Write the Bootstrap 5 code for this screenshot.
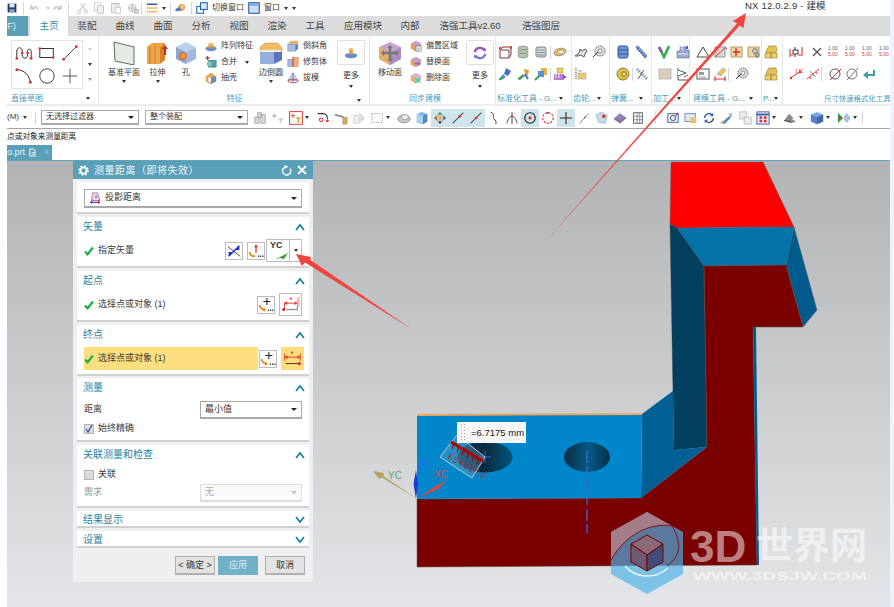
<!DOCTYPE html>
<html lang="zh">
<head>
  <meta charset="UTF-8" />
  <title>NX 12.0.2.9 - 建模</title>
  <link href="https://cdn.jsdelivr.net/npm/bootstrap@5.3.3/dist/css/bootstrap.min.css" rel="stylesheet">
  <style>
    html, body { height: 607px; overflow: hidden; }
    body { margin: 0; font: 8px/1.1 "Liberation Sans", "Noto Sans CJK SC", sans-serif; color: #3a3a3a;
           background: linear-gradient(90deg, #fff 7px, #eef3fb 7px); }
    .app { margin-left: 7px; width: 883px; height: 607px; position: relative; }
    .ic { width: 14px; height: 14px; flex: none; display: block; }
    .ic12 { width: 12px; height: 12px; flex: none; display: block; }
    .ic10 { width: 10px; height: 10px; flex: none; display: block; }

    .quick { height: 16px; background: #fff; }
    .qsep { width: 1px; height: 13px; background: #d8d8d8; flex: none; }
    .qsep.first { margin-left: 6px; }
    .qslot { width: 17px; flex: none; display: flex; justify-content: center; }
    .qcaret { margin: 0 2px 0 6px; }
    .mini-caret { width: 0; height: 0; border: 2px solid transparent; border-top: 3px solid #333; border-bottom: 0; flex: none; }
    .nx-title { position: absolute; left: 738px; top: 1px; font-size: 9.5px; letter-spacing: .2px; color: #333; }

    .tabs { height: 20px; background: #dcdcdc; font-size: 9.5px; }
    .file-tab { width: 21px; height: 20px; background: #5a9fb8; color: #d9edf3; line-height: 20px; }
    .rtab { width: 38px; height: 20px; text-align: center; line-height: 20px; color: #444; flex: none; }
    .rtab.on { background: #fff; color: #2f8db0; margin-left: 2px; }
    .rtab.w48 { width: 58px; }
    .rtab.w30 { width: 36px; }
    .rtab.wa { width: 84px; }

    .ribbon { height: 68px; background: #fff; }
    .rgrp { flex: none; border-right: 1px solid #e6e6e6; height: 68px; position: relative; }
    .rbody { height: 57px; }
    .rtop { padding-top: 5px; }
    .rlabel { height: 11px; color: #4b9dbd; font-size: 8px; line-height: 11px; white-space: nowrap; overflow: hidden; padding-left: 1px; }
    .w-g1 { width: 92px; } .w-g2 { width: 271px; } .w-g3 { width: 126px; } .w-g4 { width: 76px; }
    .w-g5 { width: 38px; } .w-g6 { width: 42px; } .w-g7 { width: 38px; } .w-g8 { width: 72px; }
    .w-g9 { width: 21px; } .w-g10 { width: 107px; border-right: 0; }
    .sk-box { width: 72px; height: 49px; border: 1px solid #e2e2e2; margin: 4px 0 0 4px; display: grid;
              grid-template-columns: repeat(3, 1fr); place-items: center; }
    .sk-box svg { width: 18px; height: 18px; }
    .sk-scroll { width: 10px; margin: 4px 0 0 2px; height: 49px; }
    .bigb { flex: none; text-align: center; padding-top: 5px; height: 56px; }
    .bigb svg { width: 24px; height: 24px; }
    .bigb .lb { margin-top: 4px; height: 11px; white-space: nowrap; }
    .w36 { width: 36px; } .w31 { width: 31px; } .w26 { width: 26px; } .w28 { width: 28px; }
    .smallcol { flex: none; padding-top: 2px; }
    .smallrow { height: 16px; gap: 4px; white-space: nowrap; }
    .col-a { width: 52px; margin-left: 6px; }
    .col-b { width: 50px; margin-left: 2px; }
    .col-c { width: 54px; margin-left: 2px; }
    .more-p { padding-left: 7px; }
    .ms2 { margin-left: 2px; }
    .morebox { width: 28px; height: 25px; border: 1px solid #e0e0e0; border-radius: 2px; flex: none; margin-top: 4px; }
    .morecol { flex: none; width: 28px; text-align: center; }
    .morecol .lb { margin-top: 7px; }
    .irow { height: 22px; }
    .islot { width: 18px; flex: none; }
    .islot17 { width: 17px; flex: none; }
    .vs { width: 1px; height: 13px; background: #d4d4d4; flex: none; }
    .dim-label { padding-left: 41px; font-size: 7.4px; }

    .gapbar { height: 2px; background: #ededed; }
    .tools { height: 22px; background: #fff; padding-top: 1px; }
    .tb { width: 18px; height: 18px; flex: none; display: flex; align-items: center; justify-content: center; }
    .tb.act { background: #cfe5ec; }
    .cr { width: 9px; flex: none; }
    .tsel { height: 15px; border: 1px solid #aaa; border-bottom-width: 2px; border-radius: 0; padding: 0 4px; font-size: 8px; line-height: 12px; color: #333; background: #fff; flex: none; }
    .dropdown-toggle::after { border-top-width: 3px; border-left-width: 3px; border-right-width: 3px; margin-left: 0; color: #222; }
    .tsel1 { width: 98px; margin-left: 5px; }
    .tsel2 { width: 103px; margin-left: 6px; margin-right: 3px; }
    .toolline { height: 1px; background: #a5a5a5; }
    .cue { height: 16px; background: #fff; color: #222; line-height: 16px; font-size: 7.7px; }
    .docbar { height: 15px; background: #fff; }
    .doctab { width: 45px; height: 15px; background: #5a9fb8; color: #eaf5f8; font-size: 9px; line-height: 15px; overflow: hidden; }

    .viewport { height: 447px; position: relative; border-top: 1px solid #62a6bd;
                background: linear-gradient(#b2b3b5, #e4e5e8); }
    .model { position: absolute; left: 0; top: 0; width: 883px; height: 446px; display: block; }
    .overlay { position: absolute; left: -7px; top: 0; width: 894px; height: 607px; pointer-events: none; }

    .dlg { position: absolute; left: 66px; top: 0; width: 240px; height: 421px; background: #efefef; font-size: 9px; }
    .dlg-head { height: 18px; background: #5a9fb8; color: #eaf5f8; font-size: 10px; padding: 0 5px 0 5px; }
    .dlg-title { margin-left: 5px; letter-spacing: .5px; }
    .dlg-body { padding: 3px 4px 0; gap: 3px; }
    .sec { background: #fff; border-bottom: 2px solid #d0d0d0; padding: 0 7px; flex: none; position: relative; }
    .sec-h { height: 19px; color: #2b7f9f; font-size: 10px; margin-left: -1px; }
    .sec-h svg { margin-right: -3px; }
    .h32 { height: 32px; padding-top: 7px; } .h51 { height: 51px; } .h64 { height: 64px; } .h63 { height: 63px; }
    .pull { margin-top: -1px; }
    .h17 { height: 17px; } .h17 .sec-h { height: 15px; margin-top: 1px; }
    .dsel { height: 19px; width: 100%; background: #fff; border: 1px solid #a8a8a8; border-bottom-width: 2px; border-radius: 0; padding: 0 4px; font-size: 9px; color: #333; }
    .dsel.sm { width: 102px; height: 18px; }
    .dsel.off { color: #aaa; border-color: #ddd; background: #fafafa; }
    .dsel.off::after { color: #bbb; }
    .row-sel { height: 23px; gap: 4px; margin-top: 3px; }
    .ibtn { width: 18px; height: 18px; border: 1px solid #bbb; background: #fff; flex: none; }
    .ibtn.big { width: 23px; height: 23px; }
    .ibtn.yel { background: #fedd7a; border-color: #fedd7a; }
    .ibtn.tuck { margin-left: -3px; }
    .yc-box { width: 36px; height: 23px; border: 1px solid #bbb; flex: none; margin-left: 1px; }
    .yc-l { width: 23px; border-right: 1px solid #bbb; position: relative; font-size: 9px; font-weight: 700; color: #333; padding: 1px 0 0 3px; height: 21px; }
    .yellow { background: #fedf7f; height: 23px; width: 174px; flex: none; }
    .chk-row { min-height: 0; margin-bottom: 0; padding: 0; }
    .form-check-input.ck { width: 10px; height: 10px; margin: 0; border-radius: 0; background-color: #dcdcdc; border-color: #b5b5b5; flex: none; opacity: 1; float: none; }
    .form-check-input.ck:checked { background-color: #dcdcdc; border-color: #b5b5b5;
      background-image: url("data:image/svg+xml,%3csvg xmlns='http://www.w3.org/2000/svg' viewBox='0 0 10 10'%3e%3cpath d='M2 5l2 3 4-7' fill='none' stroke='%233a4f9a' stroke-width='1.2'/%3e%3c/svg%3e"); background-size: 10px; }
    .gap5 { margin-top: 5px; }
    .gap6 { margin-top: 6px; }
    .dfoot { padding: 8px 8px 0 0; gap: 3px; }
    .dbtn { height: 19px; padding: 0; border: 1px solid #b0b0b0; border-bottom-width: 2px; border-radius: 0; background: #e2e2e2; font-size: 9px; color: #333; line-height: 15px; }
    .dbtn.apply { background: #70b1c8; border-color: #70b1c8; color: #d8edf3; }
    .w40 { width: 40px; }

    .measure { position: absolute; left: 450px; top: 261px; width: 69px; height: 21px; background: #f5f5f5; border: 1px solid #fff;
               font: 9.5px/19px "Liberation Sans", sans-serif; color: #222; padding-left: 2px; gap: 5px; white-space: nowrap; }
    .grip { width: 6px; height: 17px; background-image: radial-gradient(#aaa 35%, transparent 40%); background-size: 3px 3px; flex: none; }
  </style>
</head>
<body>
<svg width="0" height="0" class="position-absolute">
  <defs>
    <symbol id="save" viewBox="0 0 16 16"><rect x="1" y="1" width="14" height="14" fill="#1d3c6e"/><rect x="4" y="1" width="8" height="6" fill="#e3e9f1"/><rect x="4" y="10" width="8" height="5" fill="#8ea6c6"/></symbol>
    <symbol id="undo" viewBox="0 0 16 16"><path d="M4 4v5h5M4 9c2-4 8-4 9 1" fill="none" stroke="#c2c2c2" stroke-width="1.8"/></symbol>
    <symbol id="redo" viewBox="0 0 16 16"><path d="M12 4v5H7M12 9C10 5 4 5 3 10" fill="none" stroke="#c2c2c2" stroke-width="1.8"/></symbol>
    <symbol id="cut" viewBox="0 0 16 16"><path d="M12 2 5 11M6 2l7 9" stroke="#c6c6c6" stroke-width="1.5"/><circle cx="4" cy="13" r="2" fill="none" stroke="#bbb"/><circle cx="13" cy="13" r="2" fill="none" stroke="#bbb"/></symbol>
    <symbol id="copy" viewBox="0 0 16 16"><rect x="2" y="1" width="8" height="10" fill="#fff" stroke="#c2c2c2"/><rect x="6" y="5" width="8" height="10" fill="#f1f1f1" stroke="#bbb"/></symbol>
    <symbol id="paste" viewBox="0 0 16 16"><rect x="2" y="2" width="10" height="12" fill="#eee" stroke="#bbb"/><rect x="5" y="1" width="4" height="3" fill="#ccc"/><rect x="7" y="7" width="7" height="8" fill="#fff" stroke="#bbb"/></symbol>
    <symbol id="target" viewBox="0 0 16 16"><circle cx="7" cy="8" r="5" fill="#eee" stroke="#bbb"/><path d="M7 2v12M1 8h12" stroke="#aaa"/><rect x="10" y="10" width="5" height="5" fill="#ddd" stroke="#aaa"/></symbol>
    <symbol id="bars" viewBox="0 0 16 16"><path d="M1 3h14" stroke="#3558a8" stroke-width="2"/><path d="M1 8h14M1 13h14" stroke="#e29a2d" stroke-width="2" stroke-dasharray="2 1"/></symbol>
    <symbol id="planet" viewBox="0 0 16 16"><circle cx="9" cy="7" r="4.5" fill="#e8a13c"/><ellipse cx="7" cy="9" rx="7" ry="2.4" transform="rotate(-20 7 9)" fill="#5c7bb6"/><circle cx="10" cy="7" r="3" fill="#f5c465"/></symbol>
    <symbol id="winsw" viewBox="0 0 16 16"><rect x="1" y="6" width="9" height="9" fill="#fff" stroke="#1f5fb0" stroke-width="1.4"/><rect x="6" y="1" width="9" height="9" fill="#dce9f8" stroke="#1f5fb0" stroke-width="1.4"/></symbol>
    <symbol id="winblue" viewBox="0 0 16 16"><rect x="1" y="1" width="14" height="14" fill="#cfe0f7" stroke="#24509c" stroke-width="1.4"/><rect x="2" y="2" width="12" height="3" fill="#7fa6de"/></symbol>

    <symbol id="sk1" viewBox="0 0 20 20"><path d="M2 16V8c0-5 6-5 6 0v4c0 5 6 5 6 0V8c0-3 4-3 4 0v8" fill="none" stroke="#333" stroke-width="1.1"/><g fill="#d33"><circle cx="2" cy="16" r="1.5"/><circle cx="8" cy="10" r="1.5"/><circle cx="14" cy="10" r="1.5"/><circle cx="18" cy="16" r="1.5"/></g></symbol>
    <symbol id="sk2" viewBox="0 0 20 20"><rect x="2" y="5" width="15" height="10" fill="none" stroke="#333" stroke-width="1.1"/><circle cx="2" cy="5" r="1.4" fill="#d33"/><circle cx="17" cy="15" r="1.4" fill="#d33"/></symbol>
    <symbol id="sk3" viewBox="0 0 20 20"><path d="M3 17 17 3" stroke="#555" stroke-width="1.1"/><circle cx="3" cy="17" r="1.6" fill="#d33"/><circle cx="17" cy="3" r="1.6" fill="#d33"/></symbol>
    <symbol id="sk4" viewBox="0 0 20 20"><path d="M2 3c8 0 14 6 15 14" fill="none" stroke="#333" stroke-width="1.1"/><circle cx="2" cy="3" r="1.6" fill="#d33"/><circle cx="17" cy="17" r="1.6" fill="#d33"/></symbol>
    <symbol id="sk5" viewBox="0 0 20 20"><circle cx="10" cy="10" r="8" fill="none" stroke="#444" stroke-width="1.1"/></symbol>
    <symbol id="sk6" viewBox="0 0 20 20"><path d="M10 2v16M2 10h16" stroke="#555" stroke-width="1.1"/></symbol>

    <symbol id="plane" viewBox="0 0 24 24"><path d="M2 1l20 5v18L3 20z" fill="#e4ebe3" stroke="#666"/></symbol>
    <symbol id="extrude" viewBox="0 0 24 24"><path d="M1 6l5-4h13l-5 4z" fill="#f0a33c"/><path d="M1 6h13v17H1z" fill="#eda553"/><path d="M4 6v17M9 6v17" stroke="#c97a1f"/><path d="M14 6l5-4v17l-5 4z" fill="#d8812b"/><path d="M19 14v-6" stroke="#d22" stroke-width="2"/><path d="M16 8l3-4 3 4z" fill="#d22"/></symbol>
    <symbol id="hole" viewBox="0 0 24 24"><path d="M12 1l10 5-10 5L2 6z" fill="#bcd0ec"/><path d="M2 6l10 5v12L2 18z" fill="#8ea4cf"/><path d="M22 6l-10 5v12l10-5z" fill="#a4b7df"/><circle cx="9" cy="15" r="3.4" fill="#f29b1e" stroke="#d33" stroke-width=".7"/></symbol>
    <symbol id="blend" viewBox="0 0 24 24"><path d="M1 6l5-4h13l4 5v4H1z" fill="#f3bc62" stroke="#b98" stroke-width=".6"/><path d="M1 9h21v2H1z" fill="#e9eef7"/><path d="M1 11h14v12H1z" fill="#98afdc"/><path d="M15 11h8v8l-8 4z" fill="#5677b9"/></symbol>
    <symbol id="move" viewBox="0 0 24 24"><path d="M12 1l11 5v12l-11 6L1 18V6z" fill="#cba3cc"/><path d="M1 6l11 6v12L1 18z" fill="#e3b06b"/><path d="M23 6l-11 6v12l11-6z" fill="#a98cc0"/><path d="M12 6v13M5 12h14" stroke="#777" stroke-width="2.4"/><path d="M12 4l3 3H9zM12 21l3-3H9zM3 12l3-3v6zM21 12l-3-3v6z" fill="#777"/></symbol>
    <symbol id="more1" viewBox="0 0 16 16"><ellipse cx="8" cy="11" rx="7" ry="3" fill="#5c8dd0"/><rect x="6" y="3" width="4" height="7" fill="#ee9933"/><ellipse cx="8" cy="3.5" rx="2" ry="1.4" fill="#f6bd70"/></symbol>
    <symbol id="more2" viewBox="0 0 16 16"><path d="M2 7a6 6 0 0 1 11-2" fill="none" stroke="#9a4fbe" stroke-width="2.6"/><path d="M14 9a6 6 0 0 1-11 2" fill="none" stroke="#6f7fd0" stroke-width="2.6"/><path d="M11 2l4 1-1 4zM5 14l-4-1 1-4z" fill="#9a4fbe"/></symbol>

    <symbol id="array" viewBox="0 0 14 14"><ellipse cx="7" cy="10" rx="6.5" ry="3" fill="#6f90c8"/><path d="M4 9V5h6v4z" fill="#ea9a35"/><ellipse cx="7" cy="5" rx="3" ry="2" fill="#f4bf74"/></symbol>
    <symbol id="merge" viewBox="0 0 14 14"><rect x="4" y="5" width="9" height="8" fill="#4fa6a0" stroke="#2d6e70" stroke-width=".6"/><circle cx="5" cy="9" r="3" fill="#7fcac0"/><path d="M3 0v5M.5 2.5h5" stroke="#d22" stroke-width="1.3"/></symbol>
    <symbol id="shell" viewBox="0 0 14 14"><path d="M1 5l6-4 6 4v6l-6 3-6-3z" fill="#e7a24f"/><path d="M7 6l6-1v6l-6 3z" fill="#6e8ac4"/><path d="M4 6l3 1v5l-3-1z" fill="#fff"/></symbol>
    <symbol id="chamfer" viewBox="0 0 14 14"><path d="M1 5l3-4h9v4z" fill="#ecb26a"/><rect x="1" y="5" width="9" height="8" fill="#a9bee3" stroke="#6a7fb2" stroke-width=".6"/><path d="M10 5h3v5l-3 3z" fill="#5f7fbe"/></symbol>
    <symbol id="trim" viewBox="0 0 14 14"><rect x="1" y="4" width="6" height="8" fill="#a7bce4" stroke="#6a7fb2" stroke-width=".6"/><rect x="7" y="2" width="6" height="10" fill="#ebb06a" stroke="#c77" stroke-width=".6"/><path d="M7 1v12" stroke="#d33"/></symbol>
    <symbol id="draft" viewBox="0 0 14 14"><path d="M7 1l6 9H1z" fill="#cdd8ef" stroke="#6f84b8" stroke-width=".6"/><ellipse cx="7" cy="10.5" rx="6" ry="2" fill="none" stroke="#d33" stroke-width=".9"/><path d="M7 1v12" stroke="#2a58b0" stroke-width=".8"/></symbol>
    <symbol id="sync1" viewBox="0 0 14 14"><path d="M7 1l6 3v6l-6 3-6-3V4z" fill="#c99acb"/><path d="M1 4l6 3v6l-6-3z" fill="#e8a35a"/><rect x="7" y="7" width="6" height="6" fill="#fff" stroke="#666" stroke-width=".7"/><path d="M8.5 9.5h3M8.5 11.5h3" stroke="#666" stroke-width=".7"/></symbol>
    <symbol id="sync2" viewBox="0 0 14 14"><path d="M7 1l6 3v6l-6 3-6-3V4z" fill="#c99acb"/><path d="M1 4l6 3v6l-6-3z" fill="#e8a35a"/><path d="M5 9h6M9 7l2 2-2 2" fill="none" stroke="#666" stroke-width="1"/></symbol>
    <symbol id="sync3" viewBox="0 0 14 14"><path d="M7 1l6 3v6l-6 3-6-3V4z" fill="#d8b4d8"/><path d="M1 4l6 3v6l-6-3z" fill="#e9b26e"/><path d="M6 7l6 6M12 7l-6 6" stroke="#3d8" stroke-width="1.4"/></symbol>

    <symbol id="a1" viewBox="0 0 14 14"><path d="M2 5h9v8H2z" fill="#fff" stroke="#7a3a3a"/><path d="M2 5l3-3h8v8l-2 3" fill="none" stroke="#7a3a3a"/><path d="M1 4l2-2M13 1v3" stroke="#d22" stroke-width="1.5"/></symbol>
    <symbol id="a2" viewBox="0 0 14 14"><g fill="#b6c4b0" stroke="#6e7f72" stroke-width=".7"><ellipse cx="7" cy="3.5" rx="5" ry="2.3"/><ellipse cx="7" cy="7" rx="5" ry="2.3"/><ellipse cx="7" cy="10.5" rx="5" ry="2.3"/></g></symbol>
    <symbol id="a3" viewBox="0 0 14 14"><rect x="2" y="2" width="10" height="10" rx="2" fill="#cfd8c8" stroke="#7b8a80"/><path d="M3 5h8M3 7.5h8M3 10h8" stroke="#6a8aa8" stroke-width=".8"/></symbol>
    <symbol id="a4" viewBox="0 0 14 14"><ellipse cx="7" cy="7" rx="6" ry="3.6" fill="#f2b85e" stroke="#777" stroke-width=".7" transform="rotate(-15 7 7)"/><ellipse cx="8" cy="7" rx="3" ry="1.5" fill="#fff" stroke="#777" stroke-width=".5"/></symbol>
    <symbol id="b1" viewBox="0 0 14 14"><path d="M8 1l5 3-3 5-4-2z" fill="#3f6ec6"/><path d="M5 7l-4 5 2 1 5-3z" fill="#5e8ed8"/><path d="M1 13l3-2 1 1" stroke="#2aa348" stroke-width="1.5" fill="none"/></symbol>
    <symbol id="b2" viewBox="0 0 14 14"><path d="M1 12L7 7l2 2-5 4z" fill="#4d9a5c"/><path d="M8 2l5 1-1 5-3-1z" fill="#d9a23a"/><path d="M9 7l3 5" stroke="#3f6ec6" stroke-width="2"/></symbol>
    <symbol id="b3" viewBox="0 0 14 14"><path d="M7 1h6v7H7z" fill="#e8b545"/><path d="M4 4h6v6H4z" fill="#5e8ed8"/><path d="M1 13l4-4" stroke="#2aa348" stroke-width="2"/></symbol>
    <symbol id="b4" viewBox="0 0 14 14"><path d="M4 1h6v5H4z" fill="#e8cf65" stroke="#a08a30" stroke-width=".5"/><rect x="1" y="7" width="10" height="6" fill="#b47fc8"/><path d="M10 8l4 2-4 2z" fill="#8e3fb8"/><path d="M3 6v5M6 6v5" stroke="#eee"/></symbol>
    <symbol id="c1" viewBox="0 0 14 14"><path d="M1 11l4-3 1-4 2 2 3-2 2 2-2 3-1 3-3-2-3 1z" fill="#ddd" stroke="#333" stroke-width=".8"/></symbol>
    <symbol id="c2" viewBox="0 0 14 14"><circle cx="8" cy="6" r="5" fill="#ddd" stroke="#444" stroke-width=".8" stroke-dasharray="1.5 .8"/><path d="M1 12l5-5" stroke="#333"/><circle cx="8" cy="6" r="2" fill="#fff" stroke="#444" stroke-width=".6"/></symbol>
    <symbol id="c3" viewBox="0 0 14 14"><path d="M2 1v12" stroke="#333" stroke-dasharray="1 1"/><rect x="4" y="6" width="8" height="6" fill="#eec978" stroke="#998" stroke-width=".5"/><rect x="4" y="3" width="4" height="2" fill="#ccc"/></symbol>
    <symbol id="d1" viewBox="0 0 14 14"><rect x="2" y="1" width="10" height="12" rx="2" fill="#7096d6" stroke="#33558f"/><path d="M2 5h10M2 9h10" stroke="#33558f"/></symbol>
    <symbol id="d2" viewBox="0 0 14 14"><path d="M2 2l2-1 9 10-2 2z" fill="#7fa3e0" stroke="#33558f" stroke-width=".7"/><path d="M4 3l-1 2M6 5l-1 2M8 7l-1 2M10 9l-1 2" stroke="#33558f"/></symbol>
    <symbol id="d3" viewBox="0 0 14 14"><circle cx="7" cy="7" r="6" fill="#e0bf4a" stroke="#8a7a30"/><circle cx="8" cy="7" r="3" fill="#b3972f"/><circle cx="8" cy="7" r="1.3" fill="#e9e3be"/></symbol>
    <symbol id="d4" viewBox="0 0 14 14"><path d="M2 2l10 10" stroke="#8a97ae" stroke-width="3" stroke-dasharray="1.5 1"/><path d="M9 3l-6 9" stroke="#555"/></symbol>
    <symbol id="e1" viewBox="0 0 14 14"><path d="M1 2l5 10 5-11" fill="none" stroke="#2db04b" stroke-width="2.6"/><path d="M1 2l3 5" stroke="#8a4fc8" stroke-width="2.4"/></symbol>
    <symbol id="e2" viewBox="0 0 14 14"><path d="M4 2h6v3h3v8H1V6h3z" fill="#9aa9d6" stroke="#6a6f92" stroke-width=".6"/><path d="M6 2v3M2 9h10" stroke="#eee"/><path d="M10 1h2v3h-2z" fill="#3f70c0"/></symbol>
    <symbol id="e3" viewBox="0 0 14 14"><rect x="1" y="2" width="12" height="10" fill="#cfd3d8" stroke="#999" stroke-width=".6"/><path d="M1 7h12M5 2v10M9 2v10" stroke="#e9c57d"/></symbol>
    <symbol id="e4" viewBox="0 0 14 14"><path d="M2 1v12h10" fill="none" stroke="#555"/><path d="M2 3l8 3-8 3" fill="#fff" stroke="#2a7a55"/><path d="M8 10l4-2" stroke="#d33"/></symbol>
    <symbol id="f1" viewBox="0 0 14 14"><path d="M7 2L1 12h12z" fill="#fff" stroke="#444"/></symbol>
    <symbol id="f2" viewBox="0 0 14 14"><rect x="2" y="2" width="10" height="10" fill="#d8d8d8" stroke="#999"/><path d="M12 2l2 2M2 12l10-9" stroke="#c33"/></symbol>
    <symbol id="f3" viewBox="0 0 14 14"><rect x="1" y="2" width="11" height="10" fill="#eed9a4" stroke="#b59a5a"/><path d="M6 3v8M3 7h7" stroke="#d22" stroke-width="1.3"/></symbol>
    <symbol id="f4" viewBox="0 0 14 14"><rect x="1" y="2" width="11" height="10" fill="#eed9a4" stroke="#b59a5a"/><circle cx="8" cy="6" r="2.4" fill="#ccc" stroke="#777"/><circle cx="10" cy="10" r="2" fill="#bbb" stroke="#777"/></symbol>
    <symbol id="f5" viewBox="0 0 14 14"><rect x="1" y="2" width="12" height="10" fill="#fff" stroke="#555"/><rect x="3" y="5" width="5" height="3" fill="#999"/><path d="M3 10h7" stroke="#999"/></symbol>
    <symbol id="f6" viewBox="0 0 14 14"><path d="M4 7l6-6 3 2-5 6z" fill="#eac75a" stroke="#888" stroke-width=".5"/><path d="M1 12h12M2 9v5M12 9v5" stroke="#d33"/></symbol>
    <symbol id="g1" viewBox="0 0 14 14"><path d="M5 1h7l1 5-3 2-2-1-3 2-3-1 1-4z" fill="#e8c04f" stroke="#8a7a30" stroke-width=".6"/><path d="M1 8h6v5H1zM7 8h6v5H7z" fill="#f0cf6a" stroke="#8a7a30" stroke-width=".6"/></symbol>
    <symbol id="h1" viewBox="0 0 14 14"><path d="M4 5h5v4H4zM6 5V2M6 9v3" fill="#fff" stroke="#333"/><path d="M1 10h3M9 10h3M1 4v8M13 2v9" stroke="#d22"/></symbol>
    <symbol id="h2" viewBox="0 0 14 14"><path d="M3 3l8 8M11 3l-8 8" stroke="#555" stroke-width="1.3"/></symbol>
    <symbol id="h3" viewBox="0 0 14 14"><text x="1" y="5" font-size="5" fill="#666" font-family="Liberation Sans">1.00</text><text x="1" y="11" font-size="5" fill="#d33" font-family="Liberation Sans">5.00</text></symbol>
    <symbol id="h4" viewBox="0 0 14 14"><path d="M1 11l10-6" stroke="#d33"/><circle cx="2" cy="11" r="1.2" fill="#d33"/><circle cx="11" cy="5" r="1.2" fill="#d33"/><text x="6" y="6" font-size="4.5" fill="#d33" font-family="Liberation Sans">3.50</text></symbol>
    <symbol id="h5" viewBox="0 0 14 14"><path d="M1 12L13 2" stroke="#d33"/><path d="M4 10l1 2M7 7l1 2M10 5l1 2" stroke="#d33"/><path d="M4 4l6 6" stroke="#aaa"/></symbol>
    <symbol id="h6" viewBox="0 0 14 14"><circle cx="7" cy="7" r="5" fill="none" stroke="#555"/><path d="M2 13L13 2" stroke="#c33"/></symbol>
    <symbol id="h7" viewBox="0 0 14 14"><circle cx="7" cy="7" r="5" fill="none" stroke="#777"/><path d="M2 13L13 1" stroke="#777"/></symbol>
    <symbol id="h8" viewBox="0 0 14 14"><path d="M12 3v5H4" fill="none" stroke="#3aa3a8" stroke-width="2"/><path d="M6 4v8L1 8z" fill="#3aa3a8"/></symbol>

    <symbol id="k1" viewBox="0 0 16 16"><path d="M2 7h5v7H2zM9 4h5v10H9zM5 2h5v5H5z" fill="#d8d8d8" stroke="#aaa"/></symbol>
    <symbol id="k2" viewBox="0 0 16 16"><path d="M4 3v5M1.5 5.5h5" stroke="#bbb" stroke-width="1.6"/><path d="M8 8h7l-3 3v3h-2v-3z" fill="#d5d5d5"/></symbol>
    <symbol id="k3" viewBox="0 0 18 18"><rect x=".8" y=".8" width="16.4" height="16.4" fill="#fff" stroke="#d33" stroke-width="1.2"/><path d="M5 3v6M2 6h6" stroke="#d33"/><path d="M8 8h8l-3 3v4h-2v-4z" fill="#e3a92f"/></symbol>
    <symbol id="k4" viewBox="0 0 16 16"><path d="M2 3h6a5 5 0 0 1 5 6" fill="none" stroke="#333" stroke-width="1.2"/><path d="M13 9l2 2-2 2-2-2z" fill="#d33"/><circle cx="6" cy="10" r="2" fill="none" stroke="#d33" stroke-width="1.3"/></symbol>
    <symbol id="k5" viewBox="0 0 16 16"><path d="M1 3l10 3v2L1 5z" fill="#888"/><rect x="10" y="7" width="5" height="8" fill="#d6a94d" stroke="#888" stroke-width=".5"/></symbol>
    <symbol id="k6" viewBox="0 0 16 16"><path d="M2 5h7v9H2z" fill="#eee" stroke="#aaa" stroke-dasharray="1 1"/><path d="M8 2l6 6-4 5" fill="#ddd" stroke="#aaa" stroke-dasharray="1 1"/></symbol>
    <symbol id="k7" viewBox="0 0 16 16"><rect x="2" y="3" width="12" height="10" fill="#fff" stroke="#888" stroke-dasharray="1.4 1.4"/></symbol>
    <symbol id="k8" viewBox="0 0 16 16"><ellipse cx="8" cy="9" rx="7" ry="4.5" fill="#c9c9c9" stroke="#888"/><ellipse cx="9" cy="7" rx="4" ry="3" fill="#eee" stroke="#999"/></symbol>
    <symbol id="k9" viewBox="0 0 16 16"><path d="M2 4l5-3 7 2v9l-5 3-7-2z" fill="#7fb7e8"/><path d="M9 6l5-3v9l-5 3z" fill="#4c8bc9"/><path d="M2 4l7 2v9l-7-2z" fill="#a9d4f3"/></symbol>
    <symbol id="k10" viewBox="0 0 16 16"><path d="M8 2l6 6-6 6-6-6z" fill="#ccc" stroke="#333" stroke-dasharray="1.5 1"/><circle cx="8" cy="8" r="2" fill="#e8b42a"/><circle cx="8" cy="3" r="1.3" fill="#2aa348"/><circle cx="3" cy="8" r="1.3" fill="#d33"/><circle cx="13" cy="8" r="1.3" fill="#3358b8"/><circle cx="8" cy="13" r="1.3" fill="#222"/></symbol>
    <symbol id="k11" viewBox="0 0 16 16"><path d="M2 14L14 2" stroke="#333" stroke-width="1.2"/><circle cx="10" cy="6" r="1.5" fill="#d33"/></symbol>
    <symbol id="k12" viewBox="0 0 16 16"><path d="M2 14L14 2" stroke="#333" stroke-width="1.2"/><circle cx="8" cy="8" r="1.5" fill="#d33"/></symbol>
    <symbol id="k13" viewBox="0 0 16 16"><path d="M4 1c6 3 2 6 4 8s3 3 2 6" fill="none" stroke="#333" stroke-width="1.1"/></symbol>
    <symbol id="k14" viewBox="0 0 16 16"><path d="M2 14c2-6 4-8 6-8s4 2 6 8M8 1v14" fill="none" stroke="#333"/><circle cx="8" cy="6" r="1.1" fill="#d33"/></symbol>
    <symbol id="k15" viewBox="0 0 16 16"><circle cx="8" cy="8" r="6" fill="none" stroke="#222" stroke-width="1.3"/><circle cx="8" cy="8" r="1.7" fill="#d22"/></symbol>
    <symbol id="k16" viewBox="0 0 16 16"><circle cx="8" cy="8" r="6" fill="none" stroke="#d33" stroke-width="1.3" stroke-dasharray="2.5 1.5"/><circle cx="8" cy="2" r="1" fill="#333"/></symbol>
    <symbol id="k17" viewBox="0 0 16 16"><path d="M8 1v14M1 8h14" stroke="#222" stroke-width="1.2"/><circle cx="8" cy="8" r="1.3" fill="#d22"/></symbol>
    <symbol id="k18" viewBox="0 0 16 16"><path d="M3 14L13 3" stroke="#777"/><circle cx="9" cy="7.5" r="1" fill="#d33"/></symbol>
    <symbol id="k19" viewBox="0 0 16 16"><path d="M1 4l7-3 6 4-2 9-8-1z" fill="#c3ddec" stroke="#7aa" stroke-width=".6"/><circle cx="10" cy="6" r="2" fill="#d33"/></symbol>
    <symbol id="k20" viewBox="0 0 16 16"><path d="M1 9l7-6 7 5-7 6z" fill="#8286c9" stroke="#555" stroke-width=".6"/><path d="M4 9l4 3 4-3" stroke="#d33" fill="none"/></symbol>
    <symbol id="k21" viewBox="0 0 16 16"><rect x="3" y="2" width="10" height="12" fill="#fff" stroke="#555"/><path d="M3 6h10M3 10h10M7 2v12M10 2v12" stroke="#555" stroke-width=".7"/></symbol>
    <symbol id="m1" viewBox="0 0 16 16"><rect x="2" y="3" width="12" height="10" fill="#dfe9f6" stroke="#3a64b5"/><circle cx="8" cy="8" r="3" fill="none" stroke="#555"/><path d="M14 3l-3 2" stroke="#d33" stroke-width="1.4"/></symbol>
    <symbol id="m2" viewBox="0 0 16 16"><rect x="1" y="3" width="12" height="9" fill="#dfe9f6" stroke="#6f84b8"/><rect x="7" y="7" width="7" height="7" fill="#e8c27d"/></symbol>
    <symbol id="m3" viewBox="0 0 16 16"><path d="M3 8a5 5 0 0 1 9-3" fill="none" stroke="#3a64b5" stroke-width="1.6"/><path d="M13 8a5 5 0 0 1-9 3" fill="none" stroke="#555" stroke-width="1.6"/><path d="M13 2v4H9zM3 14v-4h4z" fill="#3a64b5"/></symbol>
    <symbol id="m4" viewBox="0 0 16 16"><path d="M2 13l7-6 5-3-3 5-6 6z" fill="#5d86cc"/><path d="M9 3l5-1-1 5z" fill="#9cc1e8"/><path d="M1 14l3-2" stroke="#e9a03b" stroke-width="2"/></symbol>
    <symbol id="m5" viewBox="0 0 16 16"><rect x="2" y="1" width="8" height="8" fill="#eee" stroke="#bbb"/><rect x="7" y="7" width="8" height="8" fill="#eee" stroke="#bbb"/></symbol>
    <symbol id="m6" viewBox="0 0 16 16"><rect x="1" y="1" width="14" height="14" fill="#e6ecf7" stroke="#3058a8"/><path d="M1 4h14" stroke="#3058a8" stroke-width="2"/><g fill="#d33"><rect x="4" y="6" width="3" height="3"/><rect x="9" y="6" width="3" height="3"/><rect x="4" y="10" width="3" height="3"/><rect x="9" y="10" width="3" height="3"/></g></symbol>
    <symbol id="m7" viewBox="0 0 16 16"><path d="M1 11l6-8 5 5-2 1 5 3-6 2z" fill="#8c8c8c"/><path d="M1 11l8 1" stroke="#444"/></symbol>
    <symbol id="m8" viewBox="0 0 16 16"><path d="M8 1l7 3v8l-7 3-7-3V4z" fill="#7fa7df"/><path d="M1 4l7 3v8l-7-3z" fill="#5a83c5"/><path d="M8 7l7-3v8l-7 3z" fill="#3f68ad"/></symbol>
    <symbol id="m9" viewBox="0 0 16 16"><path d="M1 2l6 6-6 6z" fill="#2aa348"/><path d="M2 6l4 2-4 2z" fill="#d33"/><path d="M8 8l3-5 4 5-4 5z" fill="#a9c4ec" stroke="#6a8ac2" stroke-width=".6"/></symbol>

    <symbol id="chev" viewBox="0 0 10 8"><path d="M1 7l4-5 4 5" fill="none" stroke="#1d7ea3" stroke-width="1.8"/></symbol>
    <symbol id="chevd" viewBox="0 0 10 8"><path d="M1 1l4 5 4-5" fill="none" stroke="#1d7ea3" stroke-width="1.8"/></symbol>
    <symbol id="ok" viewBox="0 0 10 10"><path d="M1 5.5 3.6 8.3 9 1.5" fill="none" stroke="#20b04a" stroke-width="2.3"/></symbol>
    <symbol id="pt" viewBox="0 0 18 18"><path d="M10 1v8M6 5h8" stroke="#222" stroke-width="1.2"/><path d="M2 9c0 4 3 5 6 5" fill="none" stroke="#e58a1f" stroke-width="2"/><path d="M5 16l2-3 2 3z" fill="#e58a1f"/><path d="M11 15h1.5M13.5 15H15M16 15h1.5" stroke="#444" stroke-width="1.6"/></symbol>
    <symbol id="dist1" viewBox="0 0 23 23"><path d="M5 9v8M19 6v11" stroke="#d33"/><path d="M5 10h14" stroke="#d33"/><path d="M5 10l3-2v4zM19 10l-3-2v4z" fill="#d33"/><rect x="11" y="4" width="2" height="2" fill="#d33"/><circle cx="4" cy="17" r="1.7" fill="#d22"/><path d="M7 17h13" stroke="#999" stroke-width="1.6"/><rect x="19" y="3" width="3" height="11" fill="#f3c6c6"/></symbol>
    <symbol id="dist2" viewBox="0 0 23 23"><path d="M3 6v8M20 6v8" stroke="#d33"/><path d="M3 10h17" stroke="#d33"/><path d="M3 10l3-2v4zM20 10l-3-2v4z" fill="#d33"/><rect x="10" y="4" width="2" height="2" fill="#d33"/><path d="M4 17h14" stroke="#444" stroke-width="1.2"/><circle cx="19" cy="17" r="1.7" fill="#d22"/></symbol>
    <symbol id="vec1" viewBox="0 0 18 18"><path d="M3 15L15 3" stroke="#1c30cc" stroke-width="1.6"/><path d="M15 3v5h-5z M3 15v-5h5z" fill="#1c30cc"/><path d="M2 4l14 11" stroke="#333"/></symbol>
    <symbol id="vec2" viewBox="0 0 18 18"><path d="M9 2v9" stroke="#d22" stroke-width="1.4"/><path d="M7 5l2-3 2 3z" fill="#d22"/><path d="M2 10c0 3 2 5 6 5" fill="none" stroke="#e58a1f" stroke-width="2"/><path d="M11 15h1.5M13.5 15H15M16 15h1.5" stroke="#444" stroke-width="1.6"/></symbol>
    <symbol id="proj" viewBox="0 0 14 14"><path d="M4 1h6l3 9H3z" fill="#e9d9e5" stroke="#a03a6a" stroke-width=".7"/><path d="M1 12h12" stroke="#2233cc" stroke-width="1.3"/><path d="M3 9v5M11 9v5" stroke="#d22"/><path d="M7 4h3v3H7z" fill="#8ab"/></symbol>
    <symbol id="doc" viewBox="0 0 8 10"><path d="M1 1h4l2 2v6H1z" fill="none" stroke="#eaf5f8" stroke-width="1.2"/><path d="M3 5h3M3 7h3" stroke="#eaf5f8"/></symbol>
  </defs>
</svg>

<div class="app d-flex flex-column">
  <div class="quick d-flex align-items-center">
    <svg class="ic10"><use href="#save"/></svg>
    <div class="qsep first"></div>
    <div class="d-flex align-items-center ms-1"><svg class="ic12"><use href="#undo"/></svg><div class="mini-caret qcaret opacity-25"></div><svg class="ic12"><use href="#redo"/></svg></div>
    <div class="qsep ms-1"></div>
    <div class="d-flex align-items-center ms-1"><span class="qslot"><svg class="ic12"><use href="#cut"/></svg></span><span class="qslot"><svg class="ic12"><use href="#copy"/></svg></span><span class="qslot"><svg class="ic12"><use href="#paste"/></svg></span><span class="qslot"><svg class="ic12"><use href="#target"/></svg></span></div>
    <div class="qsep"></div>
    <div class="d-flex align-items-center ms-1"><svg class="ic12"><use href="#bars"/></svg><div class="mini-caret ms-1"></div></div>
    <div class="qsep ms-1"></div>
    <svg class="ic12 ms-1"><use href="#planet"/></svg>
    <div class="qsep ms-1"></div>
    <svg class="ic12 ms-1"><use href="#winsw"/></svg>
    <span class="ms-1">切换窗口</span>
    <svg class="ic12 ms-1"><use href="#winblue"/></svg>
    <span class="ms-1">窗口</span>
    <div class="mini-caret ms-1"></div>
    <div class="mini-caret ms-1"></div>
    <span class="nx-title">NX 12.0.2.9 - 建模</span>
  </div>

  <div class="tabs d-flex">
    <div class="file-tab">F)</div>
    <div class="rtab on">主页</div>
    <div class="rtab">装配</div>
    <div class="rtab">曲线</div>
    <div class="rtab">曲面</div>
    <div class="rtab">分析</div>
    <div class="rtab">视图</div>
    <div class="rtab">渲染</div>
    <div class="rtab">工具</div>
    <div class="rtab w48">应用模块</div>
    <div class="rtab w30">内部</div>
    <div class="rtab wa">浩强工具v2.60</div>
    <div class="rtab w48">浩强图层</div>
  </div>

  <div class="ribbon d-flex">
    <div class="rgrp w-g1">
      <div class="rbody d-flex">
        <div class="sk-box">
          <svg><use href="#sk1"/></svg><svg><use href="#sk2"/></svg><svg><use href="#sk3"/></svg>
          <svg><use href="#sk4"/></svg><svg><use href="#sk5"/></svg><svg><use href="#sk6"/></svg>
        </div>
        <div class="sk-scroll d-flex flex-column justify-content-between align-items-center py-2"><div class="mini-caret opacity-25"></div><div class="mini-caret"></div><div class="mini-caret opacity-50"></div></div>
      </div>
      <div class="rlabel d-flex justify-content-between align-items-center ps-1 pe-2"><span>直接草图</span><div class="mini-caret"></div></div>
    </div>

    <div class="rgrp w-g2">
      <div class="rbody d-flex more-p">
        <div class="bigb w36"><svg><use href="#plane"/></svg><div class="lb">基准平面</div><div class="mini-caret mx-auto"></div></div>
        <div class="bigb w31"><svg><use href="#extrude"/></svg><div class="lb">拉伸</div><div class="mini-caret mx-auto"></div></div>
        <div class="bigb w26"><svg><use href="#hole"/></svg><div class="lb">孔</div></div>
        <div class="smallcol col-a">
          <div class="smallrow d-flex align-items-center"><svg class="ic12"><use href="#array"/></svg><span>阵列特征</span></div>
          <div class="smallrow d-flex align-items-center"><svg class="ic12"><use href="#merge"/></svg><span>合并</span><div class="mini-caret ms-1"></div></div>
          <div class="smallrow d-flex align-items-center"><svg class="ic12"><use href="#shell"/></svg><span>抽壳</span></div>
        </div>
        <div class="bigb w28"><svg><use href="#blend"/></svg><div class="lb">边倒圆</div><div class="mini-caret mx-auto"></div></div>
        <div class="smallcol col-b">
          <div class="smallrow d-flex align-items-center"><svg class="ic12"><use href="#chamfer"/></svg><span>倒斜角</span></div>
          <div class="smallrow d-flex align-items-center"><svg class="ic12"><use href="#trim"/></svg><span>修剪体</span></div>
          <div class="smallrow d-flex align-items-center"><svg class="ic12"><use href="#draft"/></svg><span>拔模</span></div>
        </div>
        <div class="morecol"><div class="morebox d-flex align-items-center justify-content-center"><svg class="ic"><use href="#more1"/></svg></div><div class="lb">更多</div><div class="mini-caret mx-auto mt-1"></div></div>
      </div>
      <div class="rlabel position-relative text-center">特征<div class="mini-caret position-absolute end-0 top-50 me-2"></div></div>
    </div>

    <div class="rgrp w-g3">
      <div class="rbody d-flex">
        <div class="bigb w36 ms2"><svg><use href="#move"/></svg><div class="lb">移动面</div></div>
        <div class="smallcol col-c">
          <div class="smallrow d-flex align-items-center"><svg class="ic12"><use href="#sync1"/></svg><span>偏置区域</span></div>
          <div class="smallrow d-flex align-items-center"><svg class="ic12"><use href="#sync2"/></svg><span>替换面</span></div>
          <div class="smallrow d-flex align-items-center"><svg class="ic12"><use href="#sync3"/></svg><span>删除面</span></div>
        </div>
        <div class="morecol ms2"><div class="morebox d-flex align-items-center justify-content-center"><svg class="ic"><use href="#more2"/></svg></div><div class="lb">更多</div><div class="mini-caret mx-auto mt-1"></div></div>
      </div>
      <div class="rlabel text-center pe-3">同步建模</div>
    </div>

    <div class="rgrp w-g4">
      <div class="rbody rtop">
        <div class="irow d-flex align-items-center">
          <div class="islot"><svg class="ic mx-auto"><use href="#a1"/></svg></div><div class="islot"><svg class="ic mx-auto"><use href="#a2"/></svg></div><div class="islot"><svg class="ic mx-auto"><use href="#a3"/></svg></div><div class="vs"></div><div class="islot"><svg class="ic mx-auto"><use href="#a4"/></svg></div>
        </div>
        <div class="irow d-flex align-items-center">
          <div class="islot"><svg class="ic mx-auto"><use href="#b1"/></svg></div><div class="islot"><svg class="ic mx-auto"><use href="#b2"/></svg></div><div class="islot"><svg class="ic mx-auto"><use href="#b3"/></svg></div><div class="vs"></div><div class="islot"><svg class="ic mx-auto"><use href="#b4"/></svg></div>
        </div>
      </div>
      <div class="rlabel d-flex justify-content-between align-items-center pe-2"><span>标准化工具 - G...</span><div class="mini-caret"></div></div>
    </div>

    <div class="rgrp w-g5">
      <div class="rbody rtop">
        <div class="irow d-flex align-items-center"><div class="islot"><svg class="ic mx-auto"><use href="#c1"/></svg></div><div class="islot"><svg class="ic mx-auto"><use href="#c2"/></svg></div></div>
        <div class="irow d-flex align-items-center"><div class="islot"><svg class="ic mx-auto"><use href="#c3"/></svg></div></div>
      </div>
      <div class="rlabel d-flex justify-content-between align-items-center pe-2"><span>齿轮...</span><div class="mini-caret"></div></div>
    </div>

    <div class="rgrp w-g6">
      <div class="rbody rtop ps-1">
        <div class="irow d-flex align-items-center"><div class="islot"><svg class="ic mx-auto"><use href="#d1"/></svg></div><div class="islot"><svg class="ic mx-auto"><use href="#d2"/></svg></div></div>
        <div class="irow d-flex align-items-center"><div class="islot"><svg class="ic mx-auto"><use href="#d3"/></svg></div><div class="vs"></div><div class="islot"><svg class="ic mx-auto"><use href="#d4"/></svg></div></div>
      </div>
      <div class="rlabel d-flex justify-content-between align-items-center pe-2"><span>弹簧...</span><div class="mini-caret"></div></div>
    </div>

    <div class="rgrp w-g7">
      <div class="rbody rtop">
        <div class="irow d-flex align-items-center ps-1"><div class="islot"><svg class="ic mx-auto"><use href="#e1"/></svg></div><div class="islot"><svg class="ic mx-auto"><use href="#e2"/></svg></div></div>
        <div class="irow d-flex align-items-center ps-1"><div class="islot"><svg class="ic mx-auto"><use href="#e3"/></svg></div><div class="islot"><svg class="ic mx-auto"><use href="#e4"/></svg></div></div>
      </div>
      <div class="rlabel d-flex justify-content-between align-items-center pe-2"><span>加工...</span><div class="mini-caret"></div></div>
    </div>

    <div class="rgrp w-g8">
      <div class="rbody rtop">
        <div class="irow d-flex align-items-center ps-1"><div class="islot17"><svg class="ic mx-auto"><use href="#f1"/></svg></div><div class="islot17"><svg class="ic mx-auto"><use href="#f2"/></svg></div><div class="islot17"><svg class="ic mx-auto"><use href="#f3"/></svg></div><div class="islot17"><svg class="ic mx-auto"><use href="#f4"/></svg></div></div>
        <div class="irow d-flex align-items-center ps-1"><div class="islot17"><svg class="ic mx-auto"><use href="#f5"/></svg></div><div class="islot17"><svg class="ic mx-auto"><use href="#f6"/></svg></div><div class="vs"></div><div class="islot17 ms-1"><svg class="ic mx-auto"><use href="#c2"/></svg></div></div>
      </div>
      <div class="rlabel d-flex justify-content-between align-items-center pe-2"><span class="ms2">建模工具 - G...</span><div class="mini-caret"></div></div>
    </div>

    <div class="rgrp w-g9">
      <div class="rbody rtop">
        <div class="irow d-flex align-items-center"><div class="islot"><svg class="ic mx-auto"><use href="#g1"/></svg></div></div>
        <div class="irow d-flex align-items-center"><div class="islot"><svg class="ic mx-auto"><use href="#g1"/></svg></div></div>
      </div>
      <div class="rlabel d-flex justify-content-between align-items-center pe-1"><span>P...</span><div class="mini-caret"></div></div>
    </div>

    <div class="rgrp w-g10">
      <div class="rbody rtop">
        <div class="irow d-flex align-items-center ps-1"><div class="islot17"><svg class="ic mx-auto"><use href="#h1"/></svg></div><div class="ms-1 islot17"><svg class="ic mx-auto"><use href="#h2"/></svg></div>
          <div class="islot17"><svg class="ic mx-auto"><use href="#h3"/></svg></div>
          <div class="islot17"><svg class="ic mx-auto"><use href="#h3"/></svg></div>
          <div class="islot17"><svg class="ic mx-auto"><use href="#h3"/></svg></div>
          <div class="islot17"><svg class="ic mx-auto"><use href="#h3"/></svg></div>
        </div>
        <div class="irow d-flex align-items-center ps-1"><div class="islot17"><svg class="ic mx-auto"><use href="#h4"/></svg></div><div class="islot17"><svg class="ic mx-auto"><use href="#h5"/></svg></div><div class="vs"></div><div class="islot17 ms-1"><svg class="ic mx-auto"><use href="#h6"/></svg></div><div class="islot17"><svg class="ic mx-auto"><use href="#h7"/></svg></div><div class="islot17"><svg class="ic mx-auto"><use href="#h8"/></svg></div></div>
      </div>
      <div class="rlabel dim-label">尺寸快速格式化工具</div>
    </div>
  </div>

  <div class="gapbar"></div>
  <div class="tools d-flex align-items-center">
    <span>(M)</span><div class="mini-caret ms-1"></div>
    <div class="vs ms-2"></div>
    <button class="btn tsel tsel1 dropdown-toggle d-flex justify-content-between align-items-center">无选择过滤器</button>
    <button class="btn tsel tsel2 dropdown-toggle d-flex justify-content-between align-items-center">整个装配</button>
    <div class="tb"><svg class="ic"><use href="#k1"/></svg></div>
    <div class="tb"><svg class="ic"><use href="#k2"/></svg></div>
    <div class="tb"><svg class="ic"><use href="#k3"/></svg></div>
    <div class="cr"><div class="mini-caret"></div></div>
    <div class="tb"><svg class="ic"><use href="#k4"/></svg></div>
    <div class="tb"><svg class="ic"><use href="#k5"/></svg></div>
    <div class="tb"><svg class="ic"><use href="#k6"/></svg></div>
    <div class="tb"><svg class="ic"><use href="#k7"/></svg></div>
    <div class="cr"><div class="mini-caret"></div></div>
    <div class="tb"><svg class="ic"><use href="#k8"/></svg></div>
    <div class="tb"><svg class="ic"><use href="#k9"/></svg></div>
    <div class="tb act"><svg class="ic"><use href="#k10"/></svg></div>
    <div class="tb act"><svg class="ic"><use href="#k11"/></svg></div>
    <div class="tb act"><svg class="ic"><use href="#k12"/></svg></div>
    <div class="tb"><svg class="ic"><use href="#k13"/></svg></div>
    <div class="tb"><svg class="ic"><use href="#k14"/></svg></div>
    <div class="tb act"><svg class="ic"><use href="#k15"/></svg></div>
    <div class="tb"><svg class="ic"><use href="#k16"/></svg></div>
    <div class="tb act"><svg class="ic"><use href="#k17"/></svg></div>
    <div class="tb"><svg class="ic"><use href="#k18"/></svg></div>
    <div class="tb"><svg class="ic"><use href="#k19"/></svg></div>
    <div class="tb"><svg class="ic"><use href="#k20"/></svg></div>
    <div class="tb"><svg class="ic"><use href="#k21"/></svg></div>
    <div class="vs mx-2"></div>
    <div class="tb"><svg class="ic"><use href="#m1"/></svg></div>
    <div class="tb"><svg class="ic"><use href="#m2"/></svg></div>
    <div class="tb"><svg class="ic"><use href="#m3"/></svg></div>
    <div class="tb"><svg class="ic"><use href="#m4"/></svg></div>
    <div class="tb"><svg class="ic"><use href="#m5"/></svg></div>
    <div class="tb"><svg class="ic"><use href="#m6"/></svg></div>
    <div class="cr"><div class="mini-caret"></div></div>
    <div class="tb"><svg class="ic"><use href="#m7"/></svg></div>
    <div class="cr"><div class="mini-caret"></div></div>
    <div class="tb"><svg class="ic"><use href="#m8"/></svg></div>
    <div class="cr"><div class="mini-caret"></div></div>
    <div class="tb"><svg class="ic"><use href="#m9"/></svg></div>
    <div class="cr"><div class="mini-caret"></div></div>
    <div class="vs"></div>
  </div>
  <div class="toolline"></div>
  <div class="cue">点或对象来测量距离</div>
  <div class="docbar d-flex">
    <div class="doctab d-flex align-items-center"><span>o.prt</span><svg class="ms-1" width="7" height="9"><use href="#doc"/></svg><span class="ms-2 opacity-50">×</span></div>
  </div>

  <div class="viewport">
    <svg class="model" viewBox="7 161 883 446">
      <defs>
        <linearGradient id="hole1" x1="0" x2="1"><stop offset="0" stop-color="#0d3c5a"/><stop offset=".5" stop-color="#0a2a40"/><stop offset="1" stop-color="#04567f"/></linearGradient>
        <linearGradient id="hole2" x1="0" x2="1"><stop offset="0" stop-color="#0d2e44"/><stop offset=".55" stop-color="#045a86"/><stop offset="1" stop-color="#0a2f47"/></linearGradient>
      </defs>
      <polygon points="671,162 763,162 794,227 677,228 670,224" fill="#ff0000" stroke="#555" stroke-width=".4"/>
      <polygon points="677,228 794,227 786,265 704,266" fill="#0473aa"/>
      <polygon points="670,224 677,228 704,266 707,447 674,450" fill="#033f5f" stroke="#444" stroke-width=".4"/>
      <polygon points="794,227 817,310 803,327 786,265" fill="#005b8c" stroke="#555" stroke-width=".4"/>
      <polygon points="642,414 673,391 674,450 707,447 641,498" fill="#005f94"/>
      <polygon points="704,266 786,265 803,327 753,327 757,565 417,567 417,499 641,498 707,447" fill="#7a0000" stroke="#555" stroke-width=".5"/>
      <polygon points="753,327 756,327 759,565 757,565" fill="#005b8c"/>
      <polygon points="417,415 642,414 641,498 417,499" fill="#0087cb"/>
      <path d="M417 415 642 414" stroke="#f4a65b" stroke-width="2"/>
      <ellipse cx="485" cy="457" rx="27.5" ry="15.5" fill="url(#hole1)"/>
      <ellipse cx="587" cy="457" rx="23" ry="15" fill="url(#hole2)"/>
      <path d="M587 451V533" stroke="#3d62d0" stroke-width="1.4" stroke-dasharray="12 3 9 3 16 4 7 4"/>
      <path d="M485 451v12M478 457h13" stroke="#3d62d0"/>
      <polygon points="457,435 485,457 472,478 440,457" fill="#5e9ec0" fill-opacity=".4" stroke="#b9c7d0"/>
      <path d="M451 442 483 461" stroke="#b00000" stroke-width="3"/>
      <path d="M454 444l-2 5M459 447l-2 5M464 450l-2 5M469 453l-2 5M474 456l-2 5M479 459l-2 5" stroke="#b00000" stroke-width="1.2"/>
      <text transform="translate(447 458) rotate(30)" font-family="Liberation Sans" font-size="8" letter-spacing="-.2" fill="#b5262c">6 5 4 3 2 1 0</text>
      <polygon points="417,499 383.5,476 384,473 373,471 379,479 382,477.5" fill="#b3a35e"/>
      <polygon points="418,498 436,486 447,480 438,489" fill="#e8413d"/>
      <polygon points="416,499 413.5,484 416,470 418,484" fill="#1a3ad0"/>
      <text x="388" y="479" font-family="Liberation Sans" font-size="10" fill="#5ca765">YC</text>
      <text x="434" y="478" font-family="Liberation Sans" font-size="10" fill="#d84a4a">XC</text>
      <text x="418" y="468" font-family="Liberation Sans" font-size="10" fill="#2d6cf0">ZC</text>
    </svg>

    <div class="measure d-flex align-items-start"><span class="grip"></span><span>=6.7175 mm</span></div>

    <div class="dlg d-flex flex-column">
      <div class="dlg-head d-flex align-items-center">
        <svg width="11" height="11" viewBox="0 0 12 12"><circle cx="6" cy="6" r="3.4" fill="none" stroke="#fff" stroke-width="2"/><circle cx="6" cy="6" r="5" fill="none" stroke="#fff" stroke-width="1.6" stroke-dasharray="2 1.9"/></svg>
        <span class="dlg-title flex-grow-1">测量距离（即将失效）</span>
        <svg width="11" height="11" viewBox="0 0 12 12"><path d="M5 2a4.5 4.5 0 1 0 5 2" fill="none" stroke="#fff" stroke-width="1.5"/><path d="M4 0l4 2-4 2z" fill="#fff"/></svg>
        <svg class="ms-1" width="12" height="12" viewBox="0 0 12 12"><path d="M2 2l8 8M10 2l-8 8" stroke="#fff" stroke-width="1.8"/></svg>
      </div>
      <div class="dlg-body d-flex flex-column">
        <div class="sec h32">
          <button class="btn dsel dropdown-toggle d-flex align-items-center justify-content-between"><span class="d-flex align-items-center gap-1"><svg class="ic12"><use href="#proj"/></svg>投影距离</span></button>
        </div>

        <div class="sec h51">
          <div class="sec-h d-flex align-items-center justify-content-between"><span>矢量</span><svg width="10" height="8"><use href="#chev"/></svg></div>
          <div class="row-sel d-flex align-items-center">
            <svg class="ic10"><use href="#ok"/></svg><span class="flex-grow-1">指定矢量</span>
            <div class="d-flex align-items-center gap-0">
              <div class="ibtn me-1"><svg width="16" height="16"><use href="#vec1"/></svg></div>
              <div class="ibtn"><svg width="16" height="16"><use href="#vec2"/></svg></div>
              <div class="yc-box d-flex">
                <div class="yc-l">YC<svg class="position-absolute bottom-0 end-0" width="16" height="9" viewBox="0 0 16 9"><path d="M1 8l14-7-4 6-4-1z" fill="#3e9a36"/></svg></div>
                <div class="flex-grow-1 d-flex align-items-center justify-content-center"><div class="mini-caret"></div></div>
              </div>
            </div>
          </div>
        </div>

        <div class="sec h51">
          <div class="sec-h d-flex align-items-center justify-content-between"><span>起点</span><svg width="10" height="8"><use href="#chev"/></svg></div>
          <div class="row-sel d-flex align-items-center">
            <svg class="ic10"><use href="#ok"/></svg><span class="flex-grow-1">选择点或对象 (1)</span>
            <div class="ibtn"><svg width="16" height="16"><use href="#pt"/></svg></div>
            <div class="ibtn big"><svg width="21" height="21"><use href="#dist1"/></svg></div>
          </div>
        </div>

        <div class="sec h51">
          <div class="sec-h d-flex align-items-center justify-content-between"><span>终点</span><svg width="10" height="8"><use href="#chev"/></svg></div>
          <div class="d-flex align-items-center row-sel">
            <div class="yellow d-flex align-items-center gap-1"><svg class="ic10"><use href="#ok"/></svg><span>选择点或对象 (1)</span></div>
            <div class="ibtn tuck"><svg width="16" height="16"><use href="#pt"/></svg></div>
            <div class="ibtn big yel"><svg width="21" height="21"><use href="#dist2"/></svg></div>
          </div>
        </div>

        <div class="sec h64 pull">
          <div class="sec-h d-flex align-items-center justify-content-between"><span>测量</span><svg width="10" height="8"><use href="#chev"/></svg></div>
          <div class="d-flex align-items-center justify-content-between mt-1">距离<button class="btn dsel sm dropdown-toggle d-flex align-items-center justify-content-between">最小值</button></div>
          <div class="form-check chk-row d-flex align-items-center gap-1 gap5"><input class="form-check-input ck" type="checkbox" checked><span>始终精确</span></div>
        </div>

        <div class="sec h63">
          <div class="sec-h d-flex align-items-center justify-content-between"><span>关联测量和检查</span><svg width="10" height="8"><use href="#chev"/></svg></div>
          <div class="form-check chk-row d-flex align-items-center gap-1 gap6"><input class="form-check-input ck" type="checkbox"><span>关联</span></div>
          <div class="d-flex align-items-center justify-content-between text-body-tertiary mt-1">需求<button class="btn dsel sm off dropdown-toggle d-flex align-items-center justify-content-between">无</button></div>
        </div>

        <div class="sec h17"><div class="sec-h d-flex align-items-center justify-content-between"><span>结果显示</span><svg width="10" height="8"><use href="#chevd"/></svg></div></div>
        <div class="sec h17"><div class="sec-h d-flex align-items-center justify-content-between"><span>设置</span><svg width="10" height="8"><use href="#chevd"/></svg></div></div>
      </div>
      <div class="dfoot d-flex justify-content-end">
        <button class="btn dbtn w40">&lt; 确定 &gt;</button>
        <button class="btn dbtn apply w40">应用</button>
        <button class="btn dbtn w40 ms-1">取消</button>
      </div>
    </div>
  </div>

  <svg class="overlay" viewBox="0 0 894 607">
    <polygon points="647,512 683,532 683,574 647,594 611,574 611,532" fill="#4db3e8" fill-opacity=".68"/>
    <path d="M611 532 647 512 672 526C650 522 625 535 611 560Z" fill="#a47d88"/>
    <path d="M611 560C625 535 650 522 672 526C683 545 680 556 667 566" fill="none" stroke="#7a0000" stroke-width=".8"/>
    <path d="M625 566C635 578 655 580 668 568" fill="none" stroke="#fff" stroke-opacity=".85" stroke-width="1.5"/>
    <polygon points="647,535 663,544 647,555 631,544" fill="#8b6a78" stroke="#7a0000"/>
    <polygon points="631,544 647,555 647,571 631,562" fill="#6e5a72" stroke="#7a0000"/>
    <polygon points="663,544 647,555 647,571 663,562" fill="#3f4e78" stroke="#7a0000"/>
    <text x="690" y="562" font-family="Liberation Sans" font-weight="700" font-size="44" fill="#fff" fill-opacity=".5">3D</text>
    <text x="756" y="559" font-family="Noto Sans CJK SC" font-weight="700" font-size="37" fill="#fff" fill-opacity=".55">世界网</text>
    <text x="693" y="580" font-family="Liberation Sans" font-weight="700" font-size="11" textLength="174" lengthAdjust="spacingAndGlyphs" fill="#fff" fill-opacity=".55">WWW.3DSJW.COM</text>

    <polygon points="545,242 739.5,25.5 743.5,28 746,13 733,21 737,23.5" fill="#f1463f"/>
    <polygon points="413,330 310.5,260 311,257 296,254 302,266 305,262.5" fill="#f1463f"/>
  </svg>
</div>
<script src="https://cdn.jsdelivr.net/npm/bootstrap@5.3.3/dist/js/bootstrap.bundle.min.js"></script>
</body>
</html>
